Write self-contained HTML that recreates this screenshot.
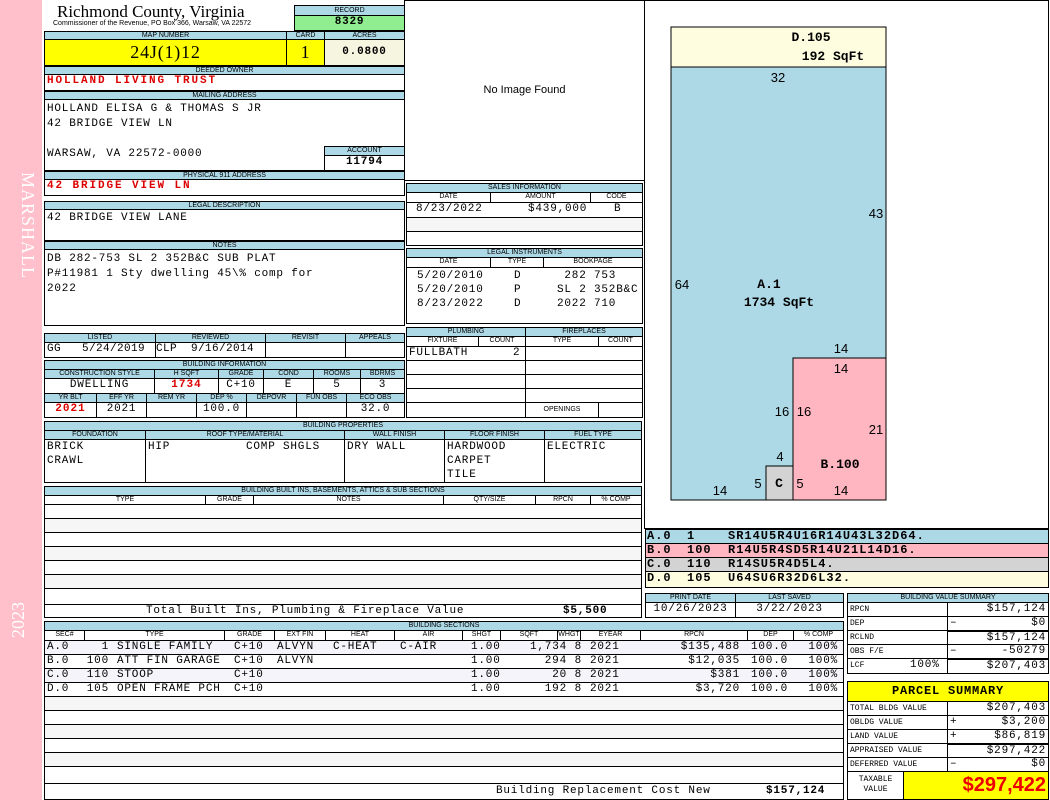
<!DOCTYPE html>
<html><head><meta charset="utf-8">
<style>
*{box-sizing:border-box;margin:0;padding:0}
body{width:1050px;height:800px;background:#fff;position:relative;overflow:hidden;font-family:"Liberation Mono",monospace;color:#000}
div{position:absolute}
.h{background:#add8e6;border:1px solid #000;font:7px "Liberation Sans",sans-serif;text-align:center;line-height:8px;white-space:nowrap;overflow:hidden}
.c{border:1px solid #000;font-size:11px;line-height:13px;white-space:nowrap;overflow:hidden;padding-left:2px;letter-spacing:0.8px}
.r{color:#d00;font-weight:bold;letter-spacing:1.9px}
.ctr{text-align:center;padding-left:0}
.rt{text-align:right;padding-right:2px}
.b{font-weight:bold}
.s{font:8px "Liberation Mono",monospace;line-height:13px;letter-spacing:0}
.row span{position:absolute;top:0}
.row .R{text-align:right}
.code{border:1px solid #000;font:bold 12px "Liberation Mono",monospace;line-height:13px;letter-spacing:1px;white-space:nowrap}
.code span{position:absolute;top:0}
.sg{float:left}
</style></head><body>
<div style="left:0;top:0;width:42px;height:800px;background:#ffc0cb"></div>
<div style="left:4px;top:172px;width:34px;height:160px;color:#fff;font:18px 'Liberation Serif',serif;writing-mode:vertical-rl;letter-spacing:1px">MARSHALL</div>
<div style="left:8px;top:578px;width:30px;height:60px;color:#fff;font:18px 'Liberation Serif',serif;writing-mode:vertical-rl;transform:rotate(180deg)">2023</div>

<div style="left:57px;top:2px;font:17px 'Liberation Serif',serif;white-space:nowrap">Richmond County, Virginia</div>
<div style="left:53px;top:20px;font:7px 'Liberation Sans',sans-serif;white-space:nowrap">Commissioner of the Revenue, PO Box 366, Warsaw, VA 22572</div>
<div class="h" style="left:294px;top:5px;width:111px;height:11px;line-height:10px">RECORD</div>
<div class="c ctr b" style="left:294px;top:15px;width:111px;height:16px;background:#90ee90">8329</div>
<div class="h" style="left:44px;top:31px;width:243px;height:9px">MAP NUMBER</div>
<div class="h" style="left:286px;top:31px;width:39px;height:9px">CARD</div>
<div class="h" style="left:324px;top:31px;width:81px;height:9px">ACRES</div>
<div class="c ctr" style="left:44px;top:39px;width:243px;height:27px;background:#ffff00;font:18px 'Liberation Serif',serif;line-height:25px">24J(1)12</div>
<div class="c ctr" style="left:286px;top:39px;width:39px;height:27px;background:#ffff00;font:18px 'Liberation Serif',serif;line-height:25px">1</div>
<div class="c ctr b" style="left:324px;top:39px;width:81px;height:27px;background:#f5f5e0;line-height:25px">0.0800</div>
<div class="h" style="left:44px;top:66px;width:361px;height:9px">DEEDED OWNER</div>
<div class="c r" style="left:44px;top:74px;width:361px;height:17px">HOLLAND LIVING TRUST</div>
<div class="h" style="left:44px;top:91px;width:361px;height:9px">MAILING ADDRESS</div>
<div class="c" style="left:44px;top:99px;width:361px;height:72px;line-height:15px;padding-top:2px">HOLLAND ELISA G &amp; THOMAS S JR<br>42 BRIDGE VIEW LN<br><br>WARSAW, VA 22572-0000</div>
<div class="h" style="left:324px;top:146px;width:81px;height:10px">ACCOUNT</div>
<div class="c ctr b" style="left:324px;top:155px;width:81px;height:16px">11794</div>
<div class="h" style="left:44px;top:171px;width:361px;height:9px">PHYSICAL 911 ADDRESS</div>
<div class="c r" style="left:44px;top:179px;width:361px;height:17px">42 BRIDGE VIEW LN</div>
<div class="h" style="left:44px;top:201px;width:361px;height:9px">LEGAL DESCRIPTION</div>
<div class="c" style="left:44px;top:209px;width:361px;height:32px;padding-top:2px">42 BRIDGE VIEW LANE</div>
<div class="h" style="left:44px;top:241px;width:361px;height:9px">NOTES</div>
<div class="c" style="left:44px;top:249px;width:361px;height:77px;line-height:15px;padding-top:2px">DB 282-753 SL 2 352B&amp;C SUB PLAT<br>P#11981 1 Sty dwelling 45\% comp for<br>2022</div>

<div class="h" style="left:44px;top:333px;width:112px;height:10px">LISTED</div>
<div class="h" style="left:155px;top:333px;width:111px;height:10px">REVIEWED</div>
<div class="h" style="left:265px;top:333px;width:81px;height:10px">REVISIT</div>
<div class="h" style="left:345px;top:333px;width:60px;height:10px">APPEALS</div>
<div class="c" style="left:44px;top:342px;width:112px;height:16px;letter-spacing:0.4px">GG &nbsp; 5/24/2019</div>
<div class="c" style="left:155px;top:342px;width:111px;height:16px;padding-left:0;letter-spacing:0.4px">CLP &nbsp;9/16/2014</div>
<div class="c" style="left:265px;top:342px;width:81px;height:16px"></div>
<div class="c" style="left:345px;top:342px;width:60px;height:16px"></div>

<div class="h" style="left:44px;top:360px;width:361px;height:10px">BUILDING INFORMATION</div>
<div class="h" style="left:44px;top:369px;width:111px;height:10px">CONSTRUCTION STYLE</div>
<div class="h" style="left:154px;top:369px;width:65px;height:10px">H SQFT</div>
<div class="h" style="left:218px;top:369px;width:46px;height:10px">GRADE</div>
<div class="h" style="left:263px;top:369px;width:51px;height:10px">COND</div>
<div class="h" style="left:313px;top:369px;width:48px;height:10px">ROOMS</div>
<div class="h" style="left:360px;top:369px;width:45px;height:10px">BDRMS</div>
<div class="c ctr" style="left:44px;top:378px;width:111px;height:16px">DWELLING</div>
<div class="c ctr r" style="left:154px;top:378px;width:65px;height:16px;letter-spacing:1px">1734</div>
<div class="c ctr" style="left:218px;top:378px;width:46px;height:16px">C+10</div>
<div class="c ctr" style="left:263px;top:378px;width:51px;height:16px">E</div>
<div class="c ctr" style="left:313px;top:378px;width:48px;height:16px">5</div>
<div class="c ctr" style="left:360px;top:378px;width:45px;height:16px">3</div>
<div class="h" style="left:44px;top:393px;width:53px;height:10px">YR BLT</div>
<div class="h" style="left:96px;top:393px;width:51px;height:10px">EFF YR</div>
<div class="h" style="left:146px;top:393px;width:51px;height:10px">REM YR</div>
<div class="h" style="left:196px;top:393px;width:51px;height:10px">DEP %</div>
<div class="h" style="left:246px;top:393px;width:51px;height:10px">DEPOVR</div>
<div class="h" style="left:296px;top:393px;width:51px;height:10px">FUN OBS</div>
<div class="h" style="left:346px;top:393px;width:59px;height:10px">ECO OBS</div>
<div class="c ctr r" style="left:44px;top:402px;width:53px;height:16px;letter-spacing:1px">2021</div>
<div class="c ctr" style="left:96px;top:402px;width:51px;height:16px">2021</div>
<div class="c" style="left:146px;top:402px;width:51px;height:16px"></div>
<div class="c ctr" style="left:196px;top:402px;width:51px;height:16px">100.0</div>
<div class="c" style="left:246px;top:402px;width:51px;height:16px"></div>
<div class="c" style="left:296px;top:402px;width:51px;height:16px"></div>
<div class="c ctr" style="left:346px;top:402px;width:59px;height:16px">32.0</div>

<div class="h" style="left:44px;top:421px;width:598px;height:10px">BUILDING PROPERTIES</div>
<div class="h" style="left:44px;top:430px;width:102px;height:10px">FOUNDATION</div>
<div class="h" style="left:145px;top:430px;width:200px;height:10px">ROOF TYPE/MATERIAL</div>
<div class="h" style="left:344px;top:430px;width:101px;height:10px">WALL FINISH</div>
<div class="h" style="left:444px;top:430px;width:101px;height:10px">FLOOR FINISH</div>
<div class="h" style="left:544px;top:430px;width:98px;height:10px">FUEL TYPE</div>
<div class="c" style="left:44px;top:439px;width:102px;height:44px;line-height:14px">BRICK<br>CRAWL</div>
<div class="c" style="left:145px;top:439px;width:200px;height:44px;line-height:14px">HIP<span style="position:absolute;left:100px">COMP SHGLS</span></div>
<div class="c" style="left:344px;top:439px;width:101px;height:44px;line-height:14px">DRY WALL</div>
<div class="c" style="left:444px;top:439px;width:101px;height:44px;line-height:14px">HARDWOOD<br>CARPET<br>TILE</div>
<div class="c" style="left:544px;top:439px;width:98px;height:44px;line-height:14px">ELECTRIC</div>

<div class="h" style="left:44px;top:486px;width:598px;height:10px">BUILDING BUILT INS, BASEMENTS, ATTICS &amp; SUB SECTIONS</div>
<div class="h" style="left:44px;top:495px;width:162px;height:10px;background:#fff">TYPE</div>
<div class="h" style="left:205px;top:495px;width:49px;height:10px;background:#fff">GRADE</div>
<div class="h" style="left:253px;top:495px;width:191px;height:10px;background:#fff">NOTES</div>
<div class="h" style="left:443px;top:495px;width:93px;height:10px;background:#fff">QTY/SIZE</div>
<div class="h" style="left:535px;top:495px;width:56px;height:10px;background:#fff">RPCN</div>
<div class="h" style="left:590px;top:495px;width:52px;height:10px;background:#fff">% COMP</div>
<div class="c" style="left:44px;top:504px;width:598px;height:15px"></div>
<div class="c" style="left:44px;top:518px;width:598px;height:15px;background:#f6f6f6"></div>
<div class="c" style="left:44px;top:532px;width:598px;height:15px"></div>
<div class="c" style="left:44px;top:546px;width:598px;height:15px;background:#f6f6f6"></div>
<div class="c" style="left:44px;top:560px;width:598px;height:15px"></div>
<div class="c" style="left:44px;top:574px;width:598px;height:15px;background:#f6f6f6"></div>
<div class="c" style="left:44px;top:588px;width:598px;height:17px"></div>
<div class="c" style="left:44px;top:604px;width:598px;height:14px;line-height:12px;padding-left:101px">Total Built Ins, Plumbing &amp; Fireplace Value<span class="b" style="position:absolute;left:518px">$5,500</span></div>

<div class="h" style="left:44px;top:621px;width:800px;height:10px">BUILDING SECTIONS</div>
<div class="h" style="left:44px;top:630px;width:41px;height:11px;background:#fff">SEC#</div>
<div class="h" style="left:84px;top:630px;width:141px;height:11px;background:#fff">TYPE</div>
<div class="h" style="left:224px;top:630px;width:51px;height:11px;background:#fff">GRADE</div>
<div class="h" style="left:274px;top:630px;width:52px;height:11px;background:#fff">EXT FIN</div>
<div class="h" style="left:325px;top:630px;width:70px;height:11px;background:#fff">HEAT</div>
<div class="h" style="left:394px;top:630px;width:69px;height:11px;background:#fff">AIR</div>
<div class="h" style="left:462px;top:630px;width:39px;height:11px;background:#fff">SHGT</div>
<div class="h" style="left:500px;top:630px;width:58px;height:11px;background:#fff">SQFT</div>
<div class="h" style="left:557px;top:630px;width:24px;height:11px;background:#fff">WHGT</div>
<div class="h" style="left:580px;top:630px;width:61px;height:11px;background:#fff">EYEAR</div>
<div class="h" style="left:640px;top:630px;width:108px;height:11px;background:#fff">RPCN</div>
<div class="h" style="left:747px;top:630px;width:47px;height:11px;background:#fff">DEP</div>
<div class="h" style="left:793px;top:630px;width:51px;height:11px;background:#fff">% COMP</div>

<div class="c row" style="left:44px;top:640px;width:800px;height:15px;background:#f4f4fa"><span style="left:2px">A.0</span><span class="R" style="right:734px">1</span><span style="left:72px">SINGLE FAMILY</span><span style="left:189px">C+10</span><span style="left:232px">ALVYN</span><span style="left:288px">C-HEAT</span><span style="left:355px">C-AIR</span><span style="left:426px">1.00</span><span class="R" style="right:276px">1,734</span><span class="R" style="right:261px">8</span><span style="left:545px">2021</span><span class="R" style="right:103px">$135,488</span><span style="left:706px">100.0</span><span class="R" style="right:5px">100%</span></div>
<div class="c row" style="left:44px;top:654px;width:800px;height:15px"><span style="left:2px">B.0</span><span class="R" style="right:734px">100</span><span style="left:72px">ATT FIN GARAGE</span><span style="left:189px">C+10</span><span style="left:232px">ALVYN</span><span style="left:426px">1.00</span><span class="R" style="right:276px">294</span><span class="R" style="right:261px">8</span><span style="left:545px">2021</span><span class="R" style="right:103px">$12,035</span><span style="left:706px">100.0</span><span class="R" style="right:5px">100%</span></div>
<div class="c row" style="left:44px;top:668px;width:800px;height:15px;background:#f4f4fa"><span style="left:2px">C.0</span><span class="R" style="right:734px">110</span><span style="left:72px">STOOP</span><span style="left:189px">C+10</span><span style="left:426px">1.00</span><span class="R" style="right:276px">20</span><span class="R" style="right:261px">8</span><span style="left:545px">2021</span><span class="R" style="right:103px">$381</span><span style="left:706px">100.0</span><span class="R" style="right:5px">100%</span></div>
<div class="c row" style="left:44px;top:682px;width:800px;height:15px"><span style="left:2px">D.0</span><span class="R" style="right:734px">105</span><span style="left:72px">OPEN FRAME PCH</span><span style="left:189px">C+10</span><span style="left:426px">1.00</span><span class="R" style="right:276px">192</span><span class="R" style="right:261px">8</span><span style="left:545px">2021</span><span class="R" style="right:103px">$3,720</span><span style="left:706px">100.0</span><span class="R" style="right:5px">100%</span></div>
<div class="c" style="left:44px;top:696px;width:800px;height:15px;background:#f6f6f6"></div>
<div class="c" style="left:44px;top:710px;width:800px;height:15px"></div>
<div class="c" style="left:44px;top:724px;width:800px;height:15px;background:#f6f6f6"></div>
<div class="c" style="left:44px;top:738px;width:800px;height:15px"></div>
<div class="c" style="left:44px;top:752px;width:800px;height:15px;background:#f6f6f6"></div>
<div class="c" style="left:44px;top:766px;width:800px;height:18px"></div>
<div class="c" style="left:44px;top:783px;width:800px;height:17px;line-height:15px;padding-left:451px">Building Replacement Cost New<span class="b" style="position:absolute;left:721px">$157,124</span></div>

<div style="left:404px;top:0;width:241px;height:181px;border:1px solid #000;font:11px 'Liberation Sans',sans-serif;text-align:center;line-height:178px">No Image Found</div>
<div class="h" style="left:406px;top:183px;width:237px;height:10px">SALES INFORMATION</div>
<div class="h" style="left:406px;top:192px;width:85px;height:11px;background:#fff">DATE</div>
<div class="h" style="left:490px;top:192px;width:101px;height:11px;background:#fff">AMOUNT</div>
<div class="h" style="left:590px;top:192px;width:53px;height:11px;background:#fff">CODE</div>
<div class="c" style="left:406px;top:202px;width:237px;height:16px;padding-left:9px">8/23/2022<span style="position:absolute;left:121px">$439,000</span><span style="position:absolute;left:207px">B</span></div>
<div class="c" style="left:406px;top:217px;width:237px;height:15px;background:#f6f6f6"></div>
<div class="c" style="left:406px;top:231px;width:237px;height:15px"></div>
<div class="h" style="left:406px;top:248px;width:237px;height:10px">LEGAL INSTRUMENTS</div>
<div class="h" style="left:406px;top:257px;width:85px;height:11px;background:#fff">DATE</div>
<div class="h" style="left:490px;top:257px;width:54px;height:11px;background:#fff">TYPE</div>
<div class="h" style="left:543px;top:257px;width:100px;height:11px;background:#fff">BOOKPAGE</div>
<div class="c" style="left:406px;top:267px;width:237px;height:57px;line-height:14px;padding:1px 0 0 10px">5/20/2010<br>5/20/2010<br>8/23/2022
<span style="position:absolute;left:107px;top:1px">D<br>P<br>D</span>
<span style="position:absolute;left:150px;top:1px">&nbsp;282 753<br>SL 2 352B&amp;C<br>2022 710</span></div>
<div class="h" style="left:406px;top:327px;width:120px;height:10px">PLUMBING</div>
<div class="h" style="left:525px;top:327px;width:118px;height:10px">FIREPLACES</div>
<div class="h" style="left:406px;top:336px;width:73px;height:11px;background:#fff">FIXTURE</div>
<div class="h" style="left:478px;top:336px;width:48px;height:11px;background:#fff">COUNT</div>
<div class="h" style="left:525px;top:336px;width:74px;height:11px;background:#fff">TYPE</div>
<div class="h" style="left:598px;top:336px;width:45px;height:11px;background:#fff">COUNT</div>
<div class="c" style="left:406px;top:346px;width:120px;height:15px">FULLBATH<span style="position:absolute;left:106px">2</span></div>
<div class="c" style="left:406px;top:360px;width:120px;height:15px"></div>
<div class="c" style="left:406px;top:374px;width:120px;height:15px"></div>
<div class="c" style="left:406px;top:388px;width:120px;height:15px"></div>
<div class="c" style="left:406px;top:402px;width:120px;height:16px;border-top:none"></div>
<div class="c" style="left:525px;top:346px;width:118px;height:15px"></div>
<div class="c" style="left:525px;top:360px;width:118px;height:15px"></div>
<div class="c" style="left:525px;top:374px;width:118px;height:15px"></div>
<div class="c" style="left:525px;top:388px;width:118px;height:15px"></div>
<div class="h" style="left:525px;top:402px;width:74px;height:16px;background:#fff;line-height:14px">OPENINGS</div>
<div class="c" style="left:598px;top:402px;width:45px;height:16px"></div>

<div style="left:644px;top:0;width:405px;height:529px;border:1px solid #000"></div>
<svg style="position:absolute;left:644px;top:0" width="405" height="529" font-family="Liberation Sans,sans-serif" font-size="13">
<rect x="27" y="27" width="215" height="40" fill="#fffde0" stroke="#000"/>
<rect x="27" y="67" width="215" height="433" fill="#add8e6" stroke="#000"/>
<rect x="149" y="358" width="93" height="142" fill="#ffb6c1" stroke="#000"/>
<rect x="122" y="466" width="27" height="34" fill="#d3d3d3" stroke="#000"/>
<g font-family="Liberation Mono,monospace" font-weight="bold" text-anchor="middle">
<text x="167" y="41">D.105</text><text x="189" y="60">192 SqFt</text>
<text x="125" y="288">A.1</text><text x="135" y="306">1734 SqFt</text>
<text x="196" y="468">B.100</text><text x="135" y="487">C</text></g>
<g text-anchor="middle"><text x="134" y="82">32</text><text x="232" y="218">43</text><text x="38" y="289">64</text>
<text x="197" y="353">14</text><text x="197" y="373">14</text><text x="138" y="416">16</text><text x="160" y="416">16</text>
<text x="232" y="434">21</text><text x="136" y="461">4</text><text x="114" y="488">5</text><text x="156" y="488">5</text>
<text x="76" y="495">14</text><text x="197" y="495">14</text></g>
</svg>
<div class="code" style="left:645px;top:529px;width:404px;height:15px;background:#add8e6"><span style="left:1px">A.0</span><span style="left:41px">1</span><span style="left:82px">SR14U5R4U16R14U43L32D64.</span></div>
<div class="code" style="left:645px;top:543px;width:404px;height:15px;background:#ffb6c1"><span style="left:1px">B.0</span><span style="left:41px">100</span><span style="left:82px">R14U5R4SD5R14U21L14D16.</span></div>
<div class="code" style="left:645px;top:557px;width:404px;height:15px;background:#d3d3d3"><span style="left:1px">C.0</span><span style="left:41px">110</span><span style="left:82px">R14SU5R4D5L4.</span></div>
<div class="code" style="left:645px;top:571px;width:404px;height:17px;background:#fffde0"><span style="left:1px">D.0</span><span style="left:41px">105</span><span style="left:82px">U64SU6R32D6L32.</span></div>

<div class="h" style="left:645px;top:593px;width:91px;height:10px">PRINT DATE</div>
<div class="h" style="left:735px;top:593px;width:109px;height:10px">LAST SAVED</div>
<div class="c ctr" style="left:645px;top:602px;width:91px;height:16px">10/26/2023</div>
<div class="c ctr" style="left:735px;top:602px;width:109px;height:16px">3/22/2023</div>

<div class="h" style="left:847px;top:593px;width:202px;height:10px">BUILDING VALUE SUMMARY</div>
<div class="c s" style="left:847px;top:602px;width:101px;height:15px">RPCN</div><div class="c rt" style="left:947px;top:602px;width:102px;height:15px">$157,124</div>
<div class="c s" style="left:847px;top:616px;width:101px;height:15px">DEP</div><div class="c rt" style="left:947px;top:616px;width:102px;height:15px"><span class="sg">–</span>$0</div>
<div class="c s" style="left:847px;top:630px;width:101px;height:15px">RCLND</div><div class="c rt" style="left:947px;top:630px;width:102px;height:15px;border-top:2px solid #000">$157,124</div>
<div class="c s" style="left:847px;top:644px;width:101px;height:15px">OBS F/E</div><div class="c rt" style="left:947px;top:644px;width:102px;height:15px"><span class="sg">–</span>-50279</div>
<div class="c s" style="left:847px;top:658px;width:101px;height:16px">LCF<span style="position:absolute;left:62px;font-size:11px;letter-spacing:0.8px">100%</span></div><div class="c rt" style="left:947px;top:658px;width:102px;height:16px;border-top:2px solid #000">$207,403</div>

<div class="c ctr b" style="left:847px;top:681px;width:202px;height:21px;background:#ffff00;font:bold 12px 'Liberation Mono',monospace;line-height:19px">PARCEL SUMMARY</div>
<div class="c s" style="left:847px;top:701px;width:101px;height:15px">TOTAL BLDG VALUE</div><div class="c rt" style="left:947px;top:701px;width:102px;height:15px">$207,403</div>
<div class="c s" style="left:847px;top:715px;width:101px;height:15px">OBLDG VALUE</div><div class="c rt" style="left:947px;top:715px;width:102px;height:15px"><span class="sg">+</span>$3,200</div>
<div class="c s" style="left:847px;top:729px;width:101px;height:15px">LAND VALUE</div><div class="c rt" style="left:947px;top:729px;width:102px;height:15px"><span class="sg">+</span>$86,819</div>
<div class="c s" style="left:847px;top:743px;width:101px;height:15px">APPRAISED VALUE</div><div class="c rt" style="left:947px;top:743px;width:102px;height:15px;border-top:2px solid #000">$297,422</div>
<div class="c s" style="left:847px;top:757px;width:101px;height:15px">DEFERRED VALUE</div><div class="c rt" style="left:947px;top:757px;width:102px;height:15px"><span class="sg">–</span>$0</div>
<div class="c s ctr" style="left:847px;top:771px;width:57px;height:29px;line-height:10px;padding-top:3px">TAXABLE<br>VALUE</div>
<div class="c rt" style="left:903px;top:771px;width:146px;height:29px;background:#ffff00;color:#e00;font:bold 20px 'Liberation Sans',sans-serif;line-height:27px;letter-spacing:0">$297,422</div>
</body></html>
